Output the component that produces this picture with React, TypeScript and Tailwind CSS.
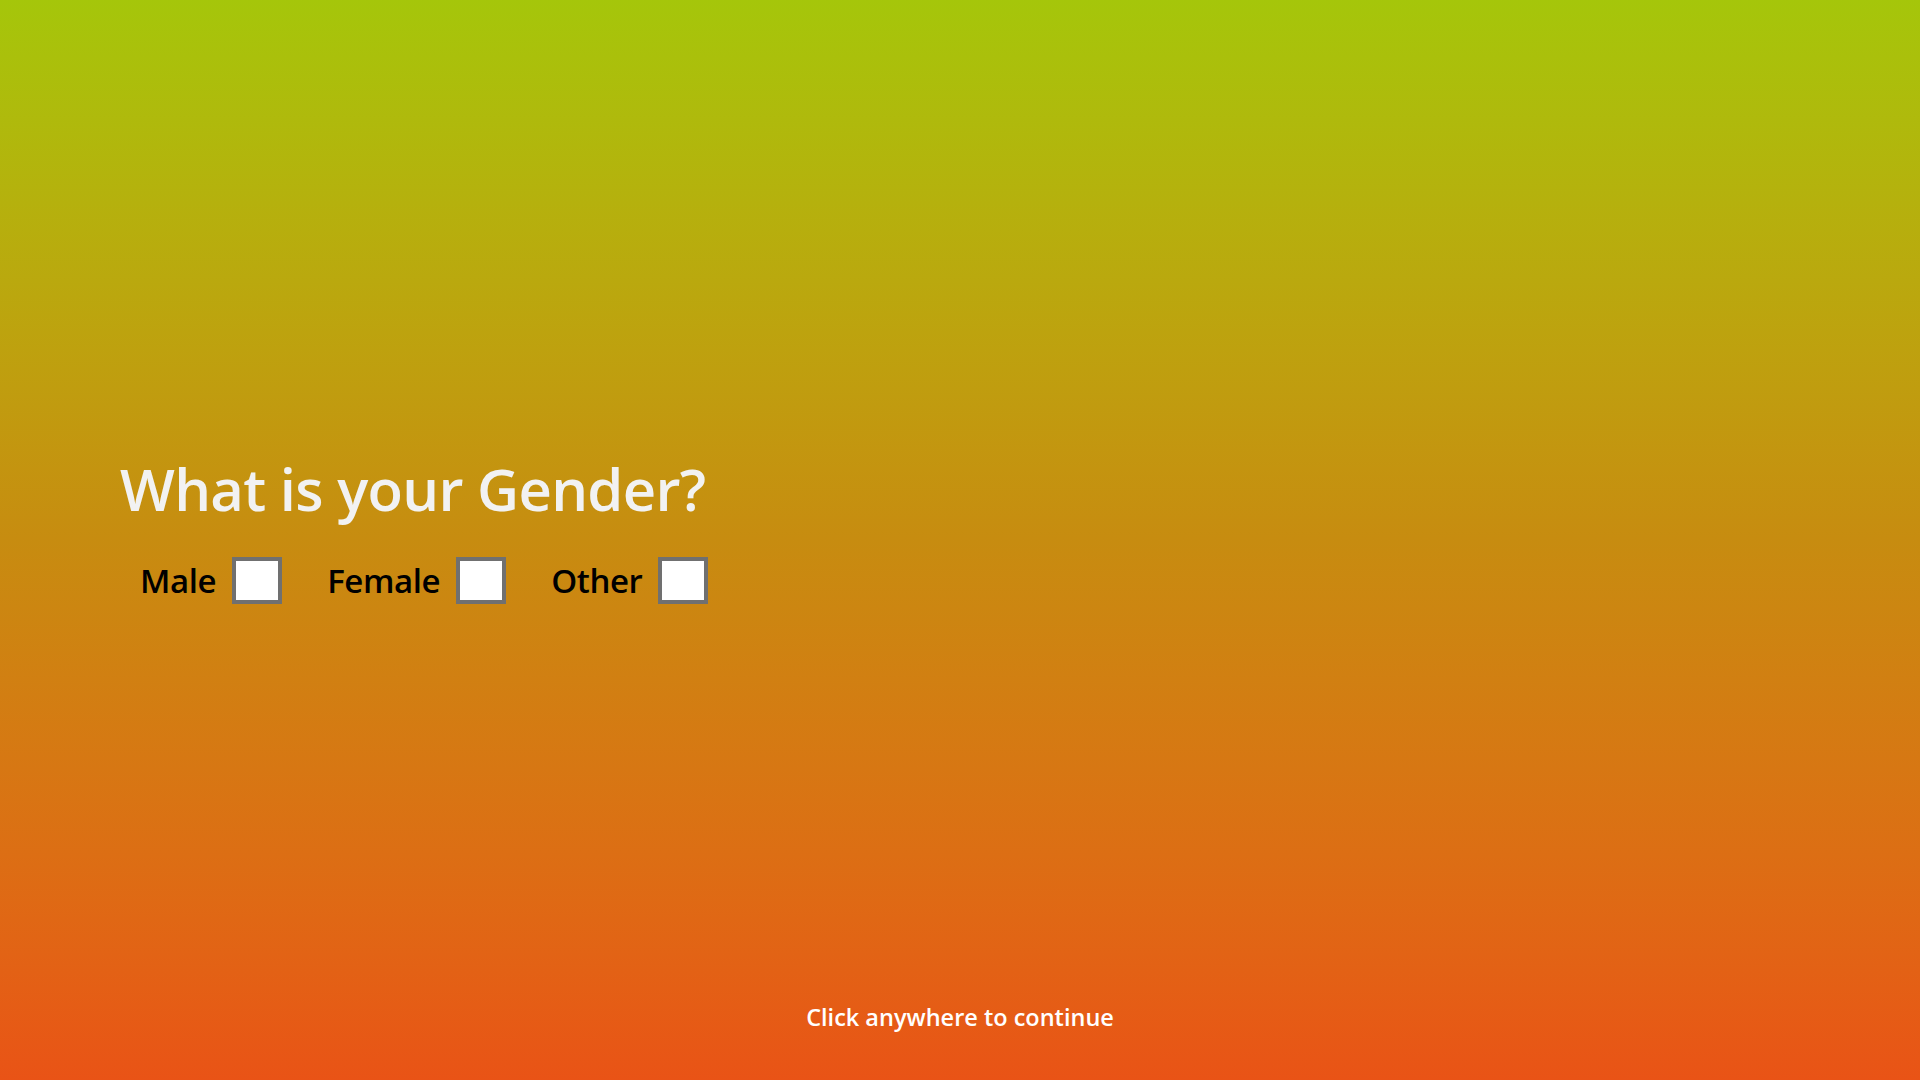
const options = ["Male", "Female", "Other"];

export default function App() {
  return (
    <div
      className="flex h-[1080px] w-full flex-col bg-gradient-to-b from-[#a5c60a] via-[#c78c10] to-[#e95316]"
      style={{ fontFamily: '"Open Sans", "Noto Sans", sans-serif' }}
    >
      {/* question block */}
      <div className="flex flex-col pl-[120px] pt-[459px]">
        <h1 className="text-[58px] leading-[60px] font-semibold tracking-[-0.7px] text-[#f2f2f2]">
          What is your Gender?
        </h1>
        <div className="mt-[38px] flex items-center gap-[45px] pl-[20px]">
          {options.map((o) => (
            <label key={o} className="flex items-center gap-[16px]">
              <span className="text-[33px] leading-none font-semibold tracking-[-0.4px] text-black">{o}</span>
              <span className="block h-[47px] w-[50px] border-4 border-[#707070] bg-white" />
            </label>
          ))}
        </div>
      </div>

      {/* footer hint */}
      <div className="mt-auto pb-[45px] text-center">
        <span className="text-[23.5px] font-semibold text-white">Click anywhere to continue</span>
      </div>
    </div>
  );
}
